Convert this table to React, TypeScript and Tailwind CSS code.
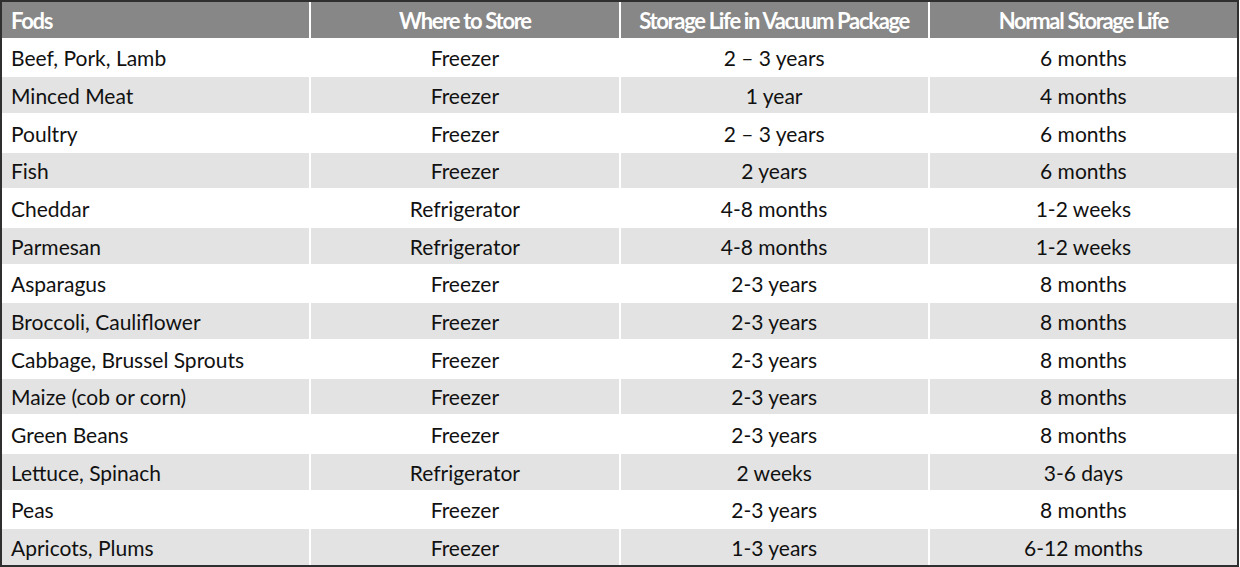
const rows: [string, string, string, string][] = [
  ["Beef, Pork, Lamb", "Freezer", "2 – 3 years", "6 months"],
  ["Minced Meat", "Freezer", "1 year", "4 months"],
  ["Poultry", "Freezer", "2 – 3 years", "6 months"],
  ["Fish", "Freezer", "2 years", "6 months"],
  ["Cheddar", "Refrigerator", "4-8 months", "1-2 weeks"],
  ["Parmesan", "Refrigerator", "4-8 months", "1-2 weeks"],
  ["Asparagus", "Freezer", "2-3 years", "8 months"],
  ["Broccoli, Cauliflower", "Freezer", "2-3 years", "8 months"],
  ["Cabbage, Brussel Sprouts", "Freezer", "2-3 years", "8 months"],
  ["Maize (cob or corn)", "Freezer", "2-3 years", "8 months"],
  ["Green Beans", "Freezer", "2-3 years", "8 months"],
  ["Lettuce, Spinach", "Refrigerator", "2 weeks", "3-6 days"],
  ["Peas", "Freezer", "2-3 years", "8 months"],
  ["Apricots, Plums", "Freezer", "1-3 years", "6-12 months"],
];

const headers = ["Fods", "Where to Store", "Storage Life in Vacuum Package", "Normal Storage Life"];

export default function App() {
  return (
    <div className="w-[1240px] h-[567px] bg-white font-['Lato','Open_Sans',sans-serif]">
      <div className="w-[1239px] h-[567px] border-2 border-[#2f2f2f] bg-white grid grid-cols-4 grid-rows-[repeat(15,1fr)] gap-x-[2px] gap-y-[2px]">
        {headers.map((h, i) => (
          <div
            key={h}
            className={
              "bg-[#878787] text-white font-bold text-[22px] tracking-[-0.06em] flex items-center pt-[1px] " +
              (i === 0 ? "pl-[9px]" : "justify-center")
            }
          >
            {h}
          </div>
        ))}
        {rows.map((r, ri) =>
          r.map((c, ci) => (
            <div
              key={ri + "-" + ci}
              className={
                "text-[21px] text-[#111] flex items-center pt-[1px] " +
                (ri % 2 === 1 ? "bg-[#e3e3e3] " : "bg-white ") +
                (ci === 0 ? "pl-[9px]" : "justify-center")
              }
            >
              {c}
            </div>
          ))
        )}
      </div>
    </div>
  );
}
